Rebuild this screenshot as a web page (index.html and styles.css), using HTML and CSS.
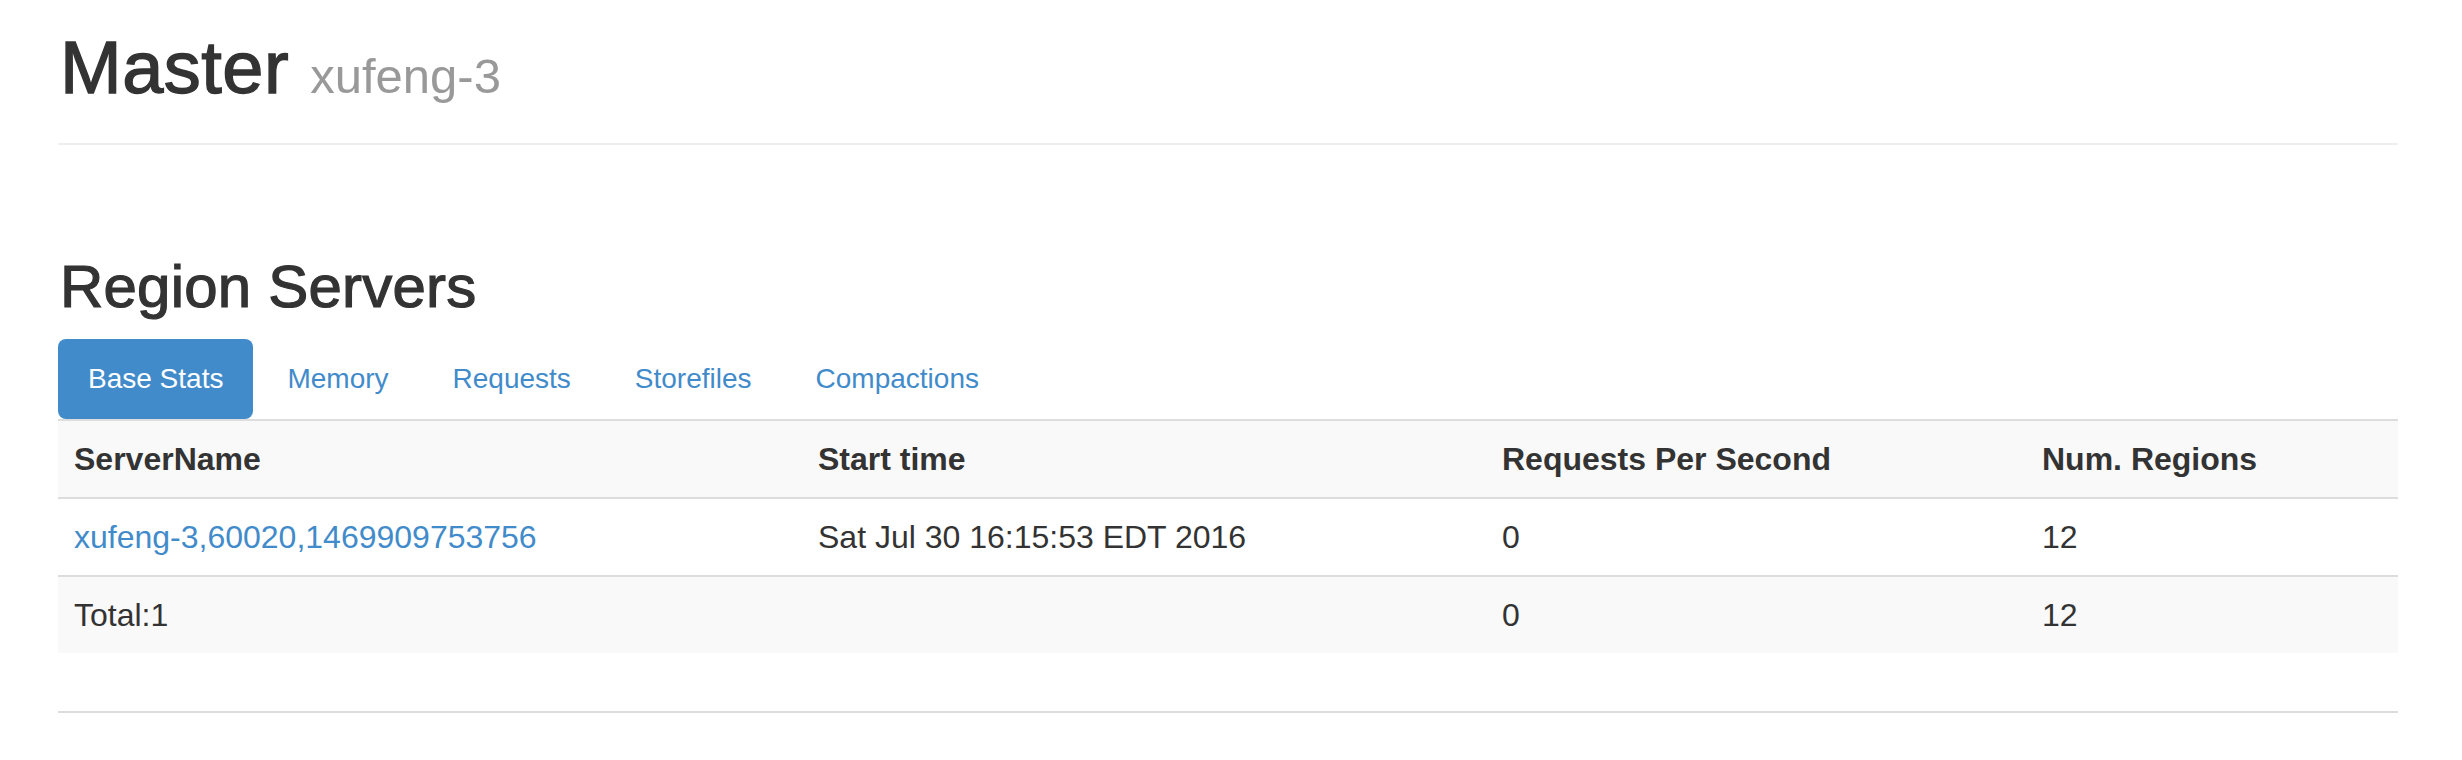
FILE: index.html
```html
<!DOCTYPE html>
<html lang="en">
<head>
    <meta charset="UTF-8">
    <meta name="viewport" content="width=device-width, initial-scale=1.0">
    <title>Master: xufeng-3</title>
    <link rel="stylesheet" href="styles.css">
</head>
<body>

<div class="container">
    <div class="page-header">
        <h1>Master <small>xufeng-3</small></h1>
    </div>

    <section>
        <h2>Region Servers</h2>
        <ul class="nav-pills">
            <li class="active"><a href="#tab_baseStats">Base Stats</a></li>
            <li><a href="#tab_memoryStats">Memory</a></li>
            <li><a href="#tab_requestStats">Requests</a></li>
            <li><a href="#tab_storeStats">Storefiles</a></li>
            <li><a href="#tab_compactStas">Compactions</a></li>
        </ul>

        <div class="tab-content">
            <table class="table table-striped">
                <tr>
                    <th class="col-name">ServerName</th>
                    <th class="col-start">Start time</th>
                    <th class="col-rps">Requests Per Second</th>
                    <th>Num. Regions</th>
                </tr>
                <tr>
                    <td><a href="#rs">xufeng-3,60020,1469909753756</a></td>
                    <td>Sat Jul 30 16:15:53 EDT 2016</td>
                    <td>0</td>
                    <td>12</td>
                </tr>
                <tr>
                    <td>Total:1</td>
                    <td></td>
                    <td>0</td>
                    <td>12</td>
                </tr>
            </table>
        </div>
    </section>

    <div class="section-end"></div>
</div>

</body>
</html>
```

FILE: styles.css
```css
/* Master status page */
body {
    font-family: "Liberation Sans", Arial, Helvetica, sans-serif;
    font-size: 28px;
    color: #333333;
    background-color: #ffffff;
    margin: 0;
}
a {
    color: #428bca;
    text-decoration: none;
}
.container {
    width: 2340px;
    margin: 0 58px;
}
.page-header {
    padding: 28px 0 35px;
    border-bottom: 2px solid #eeeeee;
}
h1 {
    font-size: 74px;
    font-weight: 500;
    line-height: 80px;
    letter-spacing: 0.5px;
    margin: 0;
    padding-left: 2px;
    -webkit-text-stroke: 1.4px #333333;
}
h1 small {
    font-size: 49px;
    font-weight: normal;
    line-height: 1;
    letter-spacing: 0;
    color: #999999;
    -webkit-text-stroke: 0;
}
h2 {
    font-size: 60px;
    font-weight: 500;
    line-height: 66px;
    letter-spacing: 0.2px;
    margin: 109px 0 19px;
    padding-left: 2px;
    -webkit-text-stroke: 1.2px #333333;
}
.nav-pills {
    display: flex;
    list-style: none;
    margin: 0;
    padding: 0;
}
.nav-pills li {
    margin-right: 4px;
}
.nav-pills a {
    display: block;
    padding: 0 30px;
    line-height: 80px;
    border-radius: 8px;
}
.nav-pills .active a {
    background-color: #428bca;
    color: #ffffff;
}
.table {
    width: 100%;
    border-collapse: collapse;
    font-size: 32px;
}
.table th,
.table td {
    text-align: left;
    padding: 16px;
    line-height: 44px;
    border-top: 2px solid #dddddd;
}
.table-striped tr:nth-child(odd) {
    background-color: #f9f9f9;
}
.col-name {
    width: 712px;
}
.col-start {
    width: 652px;
}
.col-rps {
    width: 508px;
}
.section-end {
    margin-top: 58px;
    border-top: 2px solid #dddddd;
}
```
